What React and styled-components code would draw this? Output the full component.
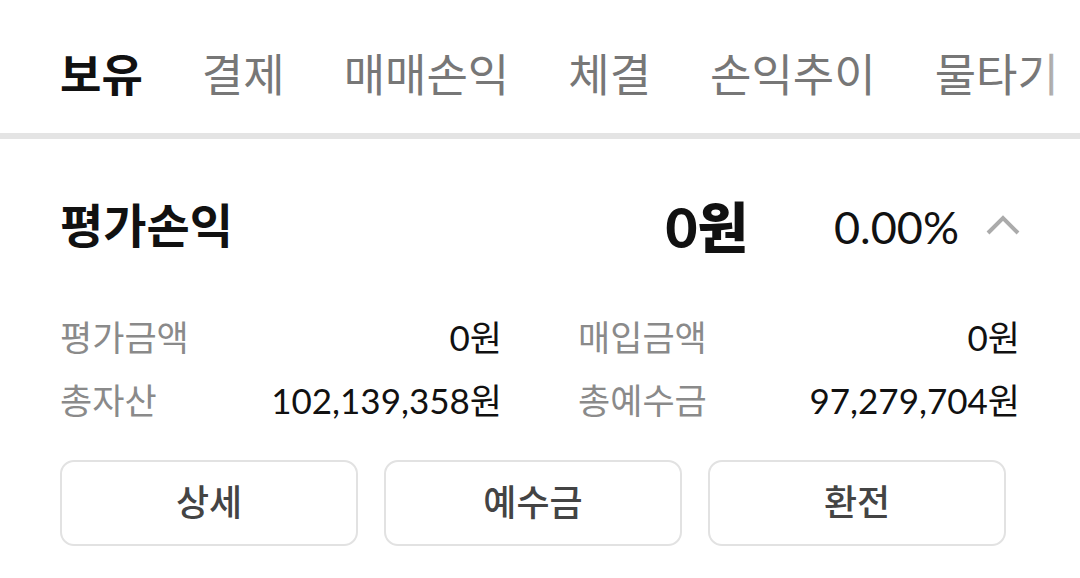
import React from 'react';
import styled, { createGlobalStyle } from 'styled-components';

const GlobalStyle = createGlobalStyle`
  body {
    margin: 0;
    background: #fff;
    font-family: Lato, "Noto Sans CJK KR", sans-serif;
    color: #111;
  }
`;

const tabs = ['보유', '결제', '매매손익', '체결', '손익추이', '물타기'];

const details = [
  { label: '평가금액', value: '0원' },
  { label: '매입금액', value: '0원' },
  { label: '총자산', value: '102,139,358원' },
  { label: '총예수금', value: '97,279,704원' },
];

const actions = ['상세', '예수금', '환전'];

function App() {
  return (
    <>
      <GlobalStyle />
      <Page>
        <TabBar>
          {tabs.map((t, i) => (
            <Tab key={t} $active={i === 0}>{t}</Tab>
          ))}
          <Fade />
        </TabBar>

        <Summary>
          <HeaderRow>
            <Title>평가손익</Title>
            <Amount>0원</Amount>
            <Rate>0.00%</Rate>
            <Chevron width="34" height="22" viewBox="0 0 34 22">
              <polyline points="2,19 17,4 32,19" fill="none" stroke="#ababab" strokeWidth="4" />
            </Chevron>
          </HeaderRow>

          <DetailGrid>
            {details.map(d => (
              <DetailRow key={d.label}>
                <Label>{d.label}</Label>
                <Value>{d.value}</Value>
              </DetailRow>
            ))}
          </DetailGrid>

          <ButtonRow>
            {actions.map(a => (
              <ActionButton key={a}>{a}</ActionButton>
            ))}
          </ButtonRow>
        </Summary>
      </Page>
    </>
  );
}

const Page = styled.div`
  width: 1080px;
  height: 578px;
  overflow: hidden;
`;

const TabBar = styled.div`
  position: relative;
  display: flex;
  gap: 59px;
  padding: 0 60px;
  border-bottom: 6px solid #e4e4e4;
  overflow: hidden;
`;

const Tab = styled.div`
  flex-shrink: 0;
  white-space: nowrap;
  font-size: 45px;
  line-height: 45px;
  padding: 53px 0 35px;
  margin-bottom: -6px;
  border-bottom: 6px solid ${p => (p.$active ? '#111' : 'transparent')};
  color: ${p => (p.$active ? '#111' : '#777')};
  font-weight: ${p => (p.$active ? 700 : 400)};
`;

const Fade = styled.div`
  position: absolute;
  top: 0;
  right: 0;
  bottom: 0;
  width: 44px;
  background: linear-gradient(to right, rgba(255, 255, 255, 0), #fff 85%);
`;

const Summary = styled.div`
  padding: 60px 60px 0;
`;

const HeaderRow = styled.div`
  display: flex;
  align-items: center;
  height: 60px;
`;

const Title = styled.div`
  flex: 1;
  font-size: 47px;
  font-weight: 700;
  margin-top: -14px;
`;

const Amount = styled.div`
  font-size: 55px;
  font-weight: 900;
  margin-right: 86px;
  margin-top: -10px;
`;

const Rate = styled.div`
  font-size: 45px;
  margin-right: 27px;
  margin-top: -4px;
`;

const Chevron = styled.svg`
  display: block;
  margin-top: -8px;
`;

const DetailGrid = styled.div`
  display: grid;
  grid-template-columns: 1fr 1fr;
  column-gap: 76px;
  margin-top: 45px;
`;

const DetailRow = styled.div`
  display: flex;
  justify-content: space-between;
  align-items: center;
  height: 63px;
`;

const Label = styled.span`
  font-size: 35px;
  color: #8a8a8a;
`;

const Value = styled.span`
  font-size: 35px;
  color: #111;
`;

const ButtonRow = styled.div`
  display: grid;
  grid-template-columns: repeat(3, 298px);
  gap: 26px;
  margin-top: 30px;
`;

const ActionButton = styled.button`
  height: 86px;
  border: 2.5px solid #e2e2e2;
  border-radius: 14px;
  background: #fff;
  font-family: Lato, "Noto Sans CJK KR", sans-serif;
  font-size: 36px;
  font-weight: 500;
  color: #444;
  padding: 0 0 6px;
`;

export default App;
